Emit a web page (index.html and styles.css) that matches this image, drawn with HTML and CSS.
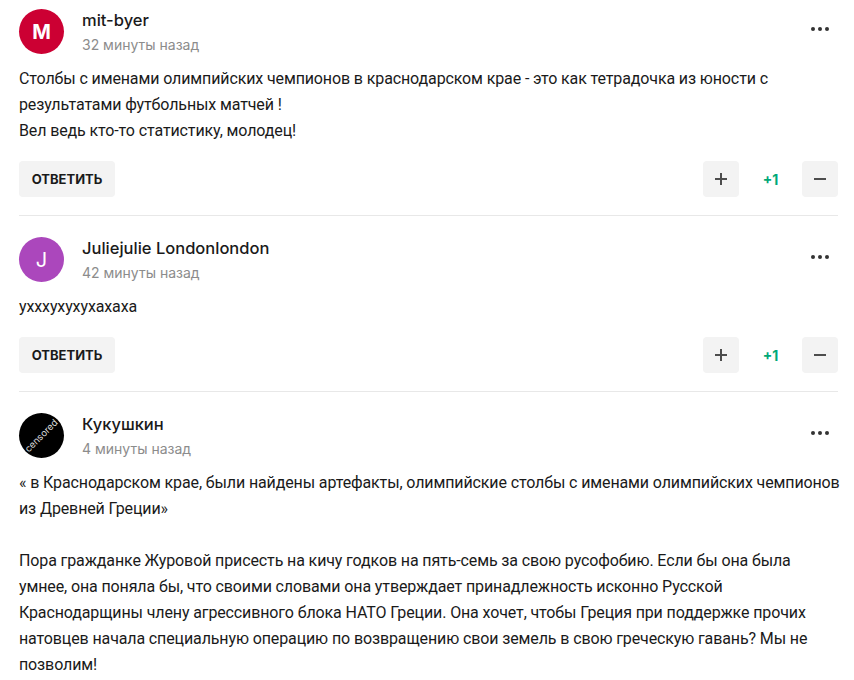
FILE: index.html
```html
<!DOCTYPE html>
<html lang="ru">
<head>
  <meta charset="UTF-8">
  <title>Комментарии</title>
  <link rel="stylesheet" href="styles.css">
</head>
<body>
  <div class="comments">

    <!-- mit-byer -->
    <div class="comment">
      <div class="head">
        <div class="avatar red">M</div>
        <div class="meta">
          <div class="name">mit-byer</div>
          <div class="time">32 минуты назад</div>
        </div>
        <div class="more"><span></span><span></span><span></span></div>
      </div>
      <p class="text">Столбы с именами олимпийских чемпионов в краснодарском крае - это как тетрадочка из юности с результатами футбольных матчей !<br>Вел ведь кто-то статистику, молодец!</p>
      <div class="actions">
        <button class="reply">ОТВЕТИТЬ</button>
        <div class="votes">
          <button class="vote plus"></button>
          <span class="score">+1</span>
          <button class="vote minus"></button>
        </div>
      </div>
    </div>

    <!-- Juliejulie -->
    <div class="comment">
      <div class="head">
        <div class="avatar purple">J</div>
        <div class="meta">
          <div class="name">Juliejulie Londonlondon</div>
          <div class="time">42 минуты назад</div>
        </div>
        <div class="more"><span></span><span></span><span></span></div>
      </div>
      <p class="text">ухххухухухахаха</p>
      <div class="actions">
        <button class="reply">ОТВЕТИТЬ</button>
        <div class="votes">
          <button class="vote plus"></button>
          <span class="score">+1</span>
          <button class="vote minus"></button>
        </div>
      </div>
    </div>

    <!-- Кукушкин -->
    <div class="comment">
      <div class="head">
        <div class="avatar black"><span class="stamp">censored</span></div>
        <div class="meta">
          <div class="name">Кукушкин</div>
          <div class="time">4 минуты назад</div>
        </div>
        <div class="more"><span></span><span></span><span></span></div>
      </div>
      <p class="text">« в Краснодарском крае, были найдены артефакты, олимпийские столбы с именами олимпийских чемпионов из Древней Греции»<br><br>Пора гражданке Журовой присесть на кичу годков на пять-семь за свою русофобию. Если бы она была умнее, она поняла бы, что своими словами она утверждает принадлежность исконно Русской Краснодарщины члену агрессивного блока НАТО Греции. Она хочет, чтобы Греция при поддержке прочих натовцев начала специальную операцию по возвращению свои земель в свою греческую гавань? Мы не позволим!</p>
    </div>

  </div>
</body>
</html>
```

FILE: styles.css
```css
* { margin: 0; padding: 0; box-sizing: border-box; }
body {
  background: #fff;
  color: #1a1a1a;
  font-family: Inter, 'Noto Sans', sans-serif;
  overflow: hidden;
}
.comments { padding: 9px 16px 0 19px; }
.comment { border-bottom: 1px solid #e8e8e8; padding-bottom: 18px; margin-bottom: 21px; }
.comment:last-child { border-bottom: none; }
.head { display: flex; align-items: flex-start; }
.avatar {
  width: 45px;
  height: 45px;
  border-radius: 50%;
  display: flex;
  align-items: center;
  justify-content: center;
  color: #fff;
  font-size: 20px;
  font-weight: 700;
  overflow: hidden;
}
.red { background: #cc0033; }
.purple { background: #ab47bc; font-weight: 400; }
.black { background: #000; }
.stamp {
  flex: none;
  font-size: 9.5px;
  font-weight: 400;
  color: #ddd;
  transform: rotate(-45deg);
}
.meta { margin-left: 18px; flex: 1; }
.name { font-size: 16.5px; font-weight: 500; line-height: 22px; }
.time { font-size: 14px; line-height: 20px; margin-top: 4px; color: #8c8c8c; }
.more { display: flex; gap: 3px; margin-top: 18px; margin-right: 9px; }
.more span { width: 4px; height: 4px; border-radius: 50%; background: #333; }
.text {
  font-family: Roboto, sans-serif;
  font-size: 16px;
  letter-spacing: -0.12px;
  line-height: 26px;
  margin: 11px -4px 0 0;
}
.actions { display: flex; justify-content: space-between; margin-top: 17px; }
.reply {
  height: 36px;
  width: 96px;
  border: none;
  border-radius: 4px;
  background: #f3f3f3;
  color: #1a1a1a;
  font-family: inherit;
  font-size: 13px;
  font-weight: 700;
}
.votes { display: flex; align-items: center; }
.score { width: 63px; text-align: center; font-size: 14px; font-weight: 700; color: #00a878; }
.vote {
  position: relative;
  width: 36px;
  height: 36px;
  border: none;
  border-radius: 4px;
  background: #f3f3f3;
}
.vote::before {
  content: "";
  position: absolute;
  left: 12px;
  top: 17px;
  width: 12px;
  height: 2px;
  background: #4d4d4d;
}
.plus::after {
  content: "";
  position: absolute;
  left: 17px;
  top: 12px;
  width: 2px;
  height: 12px;
  background: #4d4d4d;
}
```
